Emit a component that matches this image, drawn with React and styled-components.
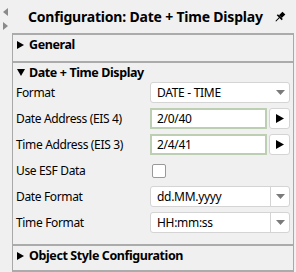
import styled, { createGlobalStyle } from "styled-components";

const Global = createGlobalStyle`
  html, body {
    margin: 0;
    background: #f0f0f0;
    font-family: "Noto Sans", "Open Sans", sans-serif;
    color: #000;
  }
`;

const Page = styled.div`
  display: flex;
  width: 296px;
  height: 272px;
  overflow: hidden;
`;

const SideStrip = styled.div`
  width: 12px;
  display: flex;
  flex-direction: column;
  align-items: flex-start;
  gap: 6px;
  padding: 8px 0 0 3px;
  box-sizing: border-box;
  flex-shrink: 0;

  svg {
    display: block;
  }
`;

const Panel = styled.div`
  width: 282px;
  display: flex;
  flex-direction: column;
`;

const Header = styled.div`
  height: 33px;
  display: flex;
  align-items: center;
  justify-content: space-between;
  padding: 0 8px 0 16px;
  box-sizing: border-box;
`;

const Title = styled.div`
  font-size: 14px;
  font-weight: 700;
  letter-spacing: -0.2px;
`;

const Body = styled.div`
  border-left: 1px solid #a9a9a9;
  border-right: 1px solid #a9a9a9;
  flex: 1;
`;

const Section = styled.div`
  border-top: 2px solid #ababab;
  padding-bottom: ${(p) => p.$pad}px;
`;

const SectionHead = styled.div`
  height: 19px;
  display: flex;
  align-items: center;
  gap: 4px;
  padding-left: 4px;
  font-size: 12.5px;
  font-weight: 700;
  letter-spacing: -0.4px;
`;

const Caret = styled.span`
  display: flex;
  width: 8px;
`;

const Rows = styled.div`
  display: flex;
  flex-direction: column;
  gap: 5px;
  padding: 0 3px 0 3px;
`;

const Row = styled.div`
  display: grid;
  grid-template-columns: 134px 1fr;
  align-items: center;
  height: 21px;
`;

const Label = styled.div`
  font-size: 12px;
  letter-spacing: -0.35px;
`;

const Combo = styled.div`
  height: 21px;
  box-sizing: border-box;
  background: #fff;
  border: 1px solid #d4d4d4;
  border-radius: 3px;
  display: flex;
  align-items: center;
`;

const ComboText = styled.div`
  flex: 1;
  padding-left: 6px;
  font-size: 12px;
  letter-spacing: -0.3px;
`;

const ComboArrow = styled.div`
  width: 18px;
  height: 100%;
  display: flex;
  align-items: center;
  justify-content: center;
  border-left: ${(p) => (p.$split ? "1px solid #d4d4d4" : "none")};
`;

const InputWrap = styled.div`
  display: flex;
  gap: 2px;
  height: 21px;
`;

const Input = styled.div`
  flex: 1;
  box-sizing: border-box;
  background: #fff;
  border: 2px solid #bccfb3;
  display: flex;
  align-items: center;
  padding-left: 5px;
  font-size: 12px;
  letter-spacing: -0.3px;
`;

const GoButton = styled.div`
  width: 21px;
  box-sizing: border-box;
  background: #fff;
  border: 1px solid #d4d4d4;
  border-radius: 3px;
  display: flex;
  align-items: center;
  justify-content: center;
`;

const Check = styled.div`
  width: 14px;
  height: 14px;
  box-sizing: border-box;
  margin-left: 2px;
  background: #fff;
  border: 1px solid #999;
  border-radius: 2px;
`;

const Tri = ({ dir, color = "#000", w = 7, h = 7 }) => {
  const pts = {
    right: "0,0 7,3.5 0,7",
    left: "7,0 0,3.5 7,7",
    down: "0,0 7,0 3.5,7",
  }[dir];
  return (
    <svg width={w} height={h} viewBox="0 0 7 7" preserveAspectRatio="none">
      <polygon points={pts} fill={color} />
    </svg>
  );
};

const Pin = () => (
  <svg width="12" height="12" viewBox="0 0 12 12">
    <g transform="rotate(45 6 6)">
      <rect x="4" y="0.5" width="4" height="5" fill="#000" />
      <rect x="2.5" y="5.5" width="7" height="1.6" fill="#000" />
      <rect x="5.5" y="7" width="1" height="5" fill="#000" />
    </g>
  </svg>
);

const ComboBox = ({ value, split }) => (
  <Combo>
    <ComboText>{value}</ComboText>
    <ComboArrow $split={split}>
      <Tri dir="down" color="#7a7a7a" w={9} h={5} />
    </ComboArrow>
  </Combo>
);

const Address = ({ value }) => (
  <InputWrap>
    <Input>{value}</Input>
    <GoButton>
      <Tri dir="right" w={8} h={9} />
    </GoButton>
  </InputWrap>
);

export default function App() {
  return (
    <Page>
      <Global />
      <SideStrip>
        <Tri dir="left" color="#8a8a8a" w={5} h={8} />
        <Tri dir="right" color="#8a8a8a" w={5} h={8} />
      </SideStrip>
      <Panel>
        <Header>
          <Title>Configuration: Date + Time Display</Title>
          <Pin />
        </Header>
        <Body>
          <Section $pad={7}>
            <SectionHead>
              <Caret>
                <Tri dir="right" w={7} h={8} />
              </Caret>
              General
            </SectionHead>
          </Section>
          <Section $pad={11}>
            <SectionHead>
              <Caret>
                <Tri dir="down" w={8} h={7} />
              </Caret>
              Date + Time Display
            </SectionHead>
            <Rows>
              <Row>
                <Label>Format</Label>
                <ComboBox value="DATE - TIME" />
              </Row>
              <Row>
                <Label>Date Address (EIS 4)</Label>
                <Address value="2/0/40" />
              </Row>
              <Row>
                <Label>Time Address (EIS 3)</Label>
                <Address value="2/4/41" />
              </Row>
              <Row>
                <Label>Use ESF Data</Label>
                <Check />
              </Row>
              <Row>
                <Label>Date Format</Label>
                <ComboBox value="dd.MM.yyyy" split />
              </Row>
              <Row>
                <Label>Time Format</Label>
                <ComboBox value="HH:mm:ss" split />
              </Row>
            </Rows>
          </Section>
          <Section $pad={5}>
            <SectionHead>
              <Caret>
                <Tri dir="right" w={7} h={8} />
              </Caret>
              Object Style Configuration
            </SectionHead>
          </Section>
          <Section $pad={0} />
        </Body>
      </Panel>
    </Page>
  );
}
